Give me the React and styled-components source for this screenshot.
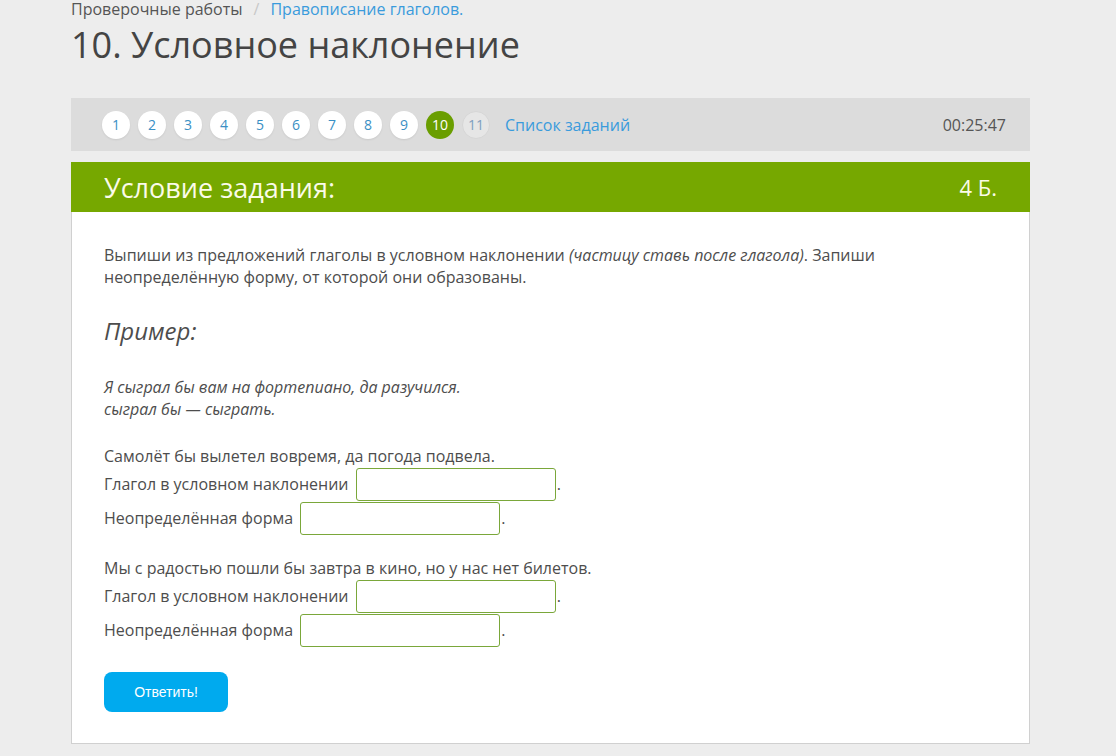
import React from "react";
import styled, { createGlobalStyle } from "styled-components";

const GlobalStyle = createGlobalStyle`
  html, body {
    margin: 0;
    padding: 0;
    background: #ededed;
  }
  body {
    font-family: "Open Sans", "Noto Sans", sans-serif;
    color: #4d4d4d;
  }
`;

const tasks = [1, 2, 3, 4, 5, 6, 7, 8, 9, 10, 11];

const questions = [
  "Самолёт бы вылетел вовремя, да погода подвела.",
  "Мы с радостью пошли бы завтра в кино, но у нас нет билетов.",
];

function App() {
  return (
    <>
      <GlobalStyle />
      <Page>
        <Breadcrumbs>
          <span>Проверочные работы</span>
          <Slash>/</Slash>
          <Crumb>Правописание глаголов.</Crumb>
        </Breadcrumbs>
        <Title>10. Условное наклонение</Title>

        <NavBar>
          <Pager>
            {tasks.map((n) => (
              <Dot key={n} state={n === 10 ? "active" : n === 11 ? "future" : "done"}>
                {n}
              </Dot>
            ))}
            <ListLink>Список заданий</ListLink>
          </Pager>
          <Timer>00:25:47</Timer>
        </NavBar>

        <Card>
          <CardHead>
            <span>Условие задания:</span>
            <Points>4 Б.</Points>
          </CardHead>
          <CardBody>
            <Task>
              Выпиши из предложений глаголы в условном наклонении{" "}
              <em>(частицу ставь после глагола)</em>. Запиши неопределённую
              форму, от которой они образованы.
            </Task>
            <ExampleTitle>Пример:</ExampleTitle>
            <Example>
              Я сыграл бы вам на фортепиано, да разучился.
              <br />
              сыграл бы — сыграть.
            </Example>

            {questions.map((q) => (
              <Question key={q}>
                <Sentence>{q}</Sentence>
                <Row>
                  Глагол в условном наклонении <Field /> <Dotmark>.</Dotmark>
                </Row>
                <Row>
                  Неопределённая форма <Field /> <Dotmark>.</Dotmark>
                </Row>
              </Question>
            ))}

            <Submit>Ответить!</Submit>
          </CardBody>
        </Card>
      </Page>
    </>
  );
}

export default App;

const Page = styled.div`
  width: 959px;
  margin-left: 71px;
`;

const Breadcrumbs = styled.div`
  padding-top: 1px;
  font-size: 16px;
  line-height: 16px;
  color: #555;
  display: flex;
  align-items: center;
`;

const Slash = styled.span`
  color: #c8c8c8;
  margin: 0 11px;
`;

const Crumb = styled.span`
  color: #3a9bdc;
`;

const Title = styled.h1`
  margin: 6px 0 31px;
  font-size: 36px;
  line-height: 44px;
  font-weight: 400;
  color: #444;
`;

const NavBar = styled.div`
  height: 53px;
  background: #dcdcdc;
  display: flex;
  align-items: center;
  justify-content: space-between;
  padding: 0 24px 0 31px;
  box-sizing: border-box;
`;

const Pager = styled.div`
  display: flex;
  align-items: center;
  gap: 8px;
`;

const Dot = styled.span`
  width: 28px;
  height: 28px;
  border-radius: 50%;
  box-sizing: border-box;
  display: flex;
  align-items: center;
  justify-content: center;
  font-size: 14px;
  background: ${(p) =>
    p.state === "active" ? "#6a9e00" : p.state === "future" ? "#e6e6e6" : "#fff"};
  color: ${(p) =>
    p.state === "active" ? "#fff" : p.state === "future" ? "#7e9fbf" : "#3a8fc4"};
  border: 1px solid ${(p) => (p.state === "future" ? "#d6d6d6" : "transparent")};
  box-shadow: ${(p) => (p.state === "done" ? "0 1px 2px rgba(0,0,0,0.08)" : "none")};
`;

const ListLink = styled.span`
  margin-left: 7px;
  font-size: 16px;
  color: #3a9bdc;
`;

const Timer = styled.span`
  font-size: 16px;
  color: #555;
`;

const Card = styled.div`
  margin-top: 11px;
  background: #fff;
  border: 1px solid #d0d0d0;
  border-top: none;
`;

const CardHead = styled.div`
  height: 50px;
  margin: 0 -1px;
  background: #76a800;
  color: #fbfbe9;
  font-size: 27px;
  display: flex;
  align-items: center;
  justify-content: space-between;
  padding: 0 33px 0 33px;
`;

const Points = styled.span`
  font-size: 22px;
`;

const CardBody = styled.div`
  padding: 32px 32px 31px;
  font-size: 16px;
  line-height: 22px;
`;

const Task = styled.p`
  margin: 0;
  max-width: 800px;
`;

const ExampleTitle = styled.h3`
  margin: 27px 0 0;
  font-size: 24px;
  line-height: 32px;
  font-weight: 400;
  font-style: italic;
`;

const Example = styled.p`
  margin: 29px 0 0;
  font-style: italic;
`;

const Question = styled.div`
  margin-top: 25px;
  & + & {
    margin-top: 22px;
  }
`;

const Sentence = styled.div``;

const Row = styled.div`
  display: flex;
  align-items: center;
  height: 34px;
  white-space: pre;
`;

const Field = styled.input`
  width: 200px;
  height: 33px;
  box-sizing: border-box;
  border: 1px solid #7aa73a;
  border-radius: 3px;
  margin-left: 3px;
  background: #fff;
  outline: none;
`;

const Dotmark = styled.span`
  margin-left: 1px;
`;

const Submit = styled.button`
  margin-top: 25px;
  width: 124px;
  height: 40px;
  border: none;
  border-radius: 8px;
  background: #00aaee;
  color: #fff;
  font-family: "Liberation Sans", Arial, sans-serif;
  font-size: 14px;
  display: block;
`;
